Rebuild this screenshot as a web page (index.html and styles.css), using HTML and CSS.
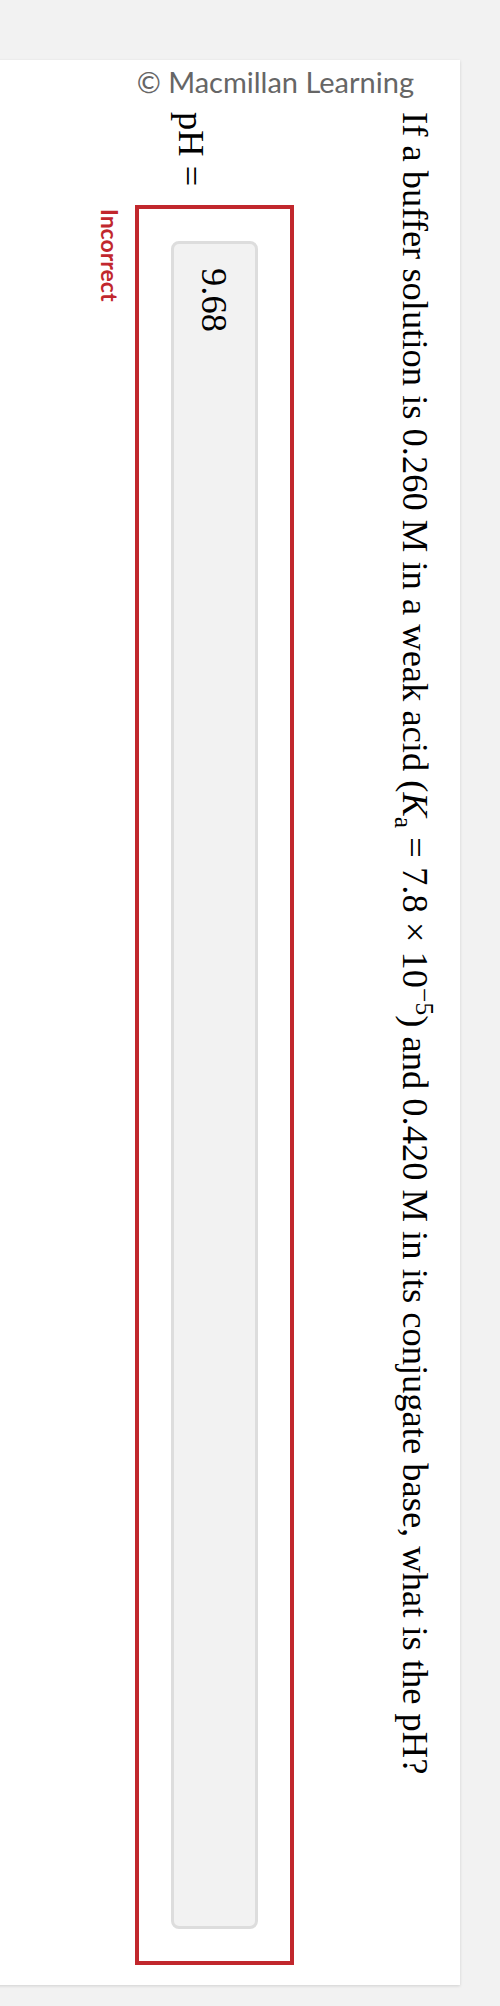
FILE: index.html
```html
<!DOCTYPE html>
<html lang="en">
<head>
<meta charset="utf-8">
<title>Buffer pH question</title>
<link rel="stylesheet" href="styles.css">
</head>
<body>
<div class="page">
  <div class="card">
    <div class="copyright">© Macmillan Learning</div>
    <div class="question-area">
      <p class="question">If a buffer solution is 0.260 M in a weak acid (<i>K</i><sub>a</sub> = 7.8 × 10<sup>−5</sup>) and 0.420 M in its conjugate base, what is the pH?</p>
      <div class="answer-row">
        <span class="label">pH =</span>
        <div class="answer-col">
          <div class="answer-box">
            <div class="answer-input">9.68</div>
          </div>
          <div class="status">Incorrect</div>
        </div>
      </div>
    </div>
  </div>
</div>
</body>
</html>
```
FILE: styles.css
```css
html, body {
  margin: 0;
  padding: 0;
  background: #f2f2f2;
}
.page {
  padding-top: 60px;
  height: 1946px;
  overflow: hidden;
}
.card {
  margin-left: -20px;
  width: 480px;
  background: #ffffff;
  box-shadow: 0 1px 3px rgba(0, 0, 0, 0.14);
  display: flex;
  flex-direction: column;
}
.copyright {
  font-family: Lato, "Open Sans", sans-serif;
  font-size: 29px;
  color: #666666;
  text-align: right;
  padding: 4px 46px 0 0;
  line-height: 36px;
  height: 44px;
}
.question-area {
  writing-mode: vertical-rl;
  text-orientation: sideways;
  height: 1877px;
  box-sizing: border-box;
  padding-block-start: 23px;
  padding-inline-start: 4px;
  padding-inline-end: 20px;
  display: flex;
  flex-direction: column;
  font-family: "Liberation Serif", "Times New Roman", serif;
  font-size: 36.5px;
  color: #000000;
}
.question {
  margin: 0;
  margin-block-end: 99px;
  line-height: 44px;
}
.question sub,
.question sup {
  font-size: 0.7em;
  line-height: 0;
}
.answer-row {
  display: flex;
  align-items: flex-start;
}
.label {
  line-height: 44px;
  margin-block-start: 81px;
  margin-inline-end: 19px;
  white-space: nowrap;
}
.answer-col {
  flex: 1;
  display: flex;
  flex-direction: column;
  align-self: stretch;
}
.answer-box {
  border: 4px solid #c1272d;
  padding: 32px;
  display: flex;
}
.answer-input {
  flex: 1;
  background: #f2f2f2;
  border: 3px solid #dddddd;
  border-radius: 8px;
  line-height: 81px;
  padding-inline-start: 24px;
}
.status {
  font-family: Lato, "Open Sans", sans-serif;
  font-weight: 700;
  font-size: 23px;
  line-height: 30px;
  color: #c1272d;
  margin-block-start: 10px;
  margin-inline-start: 4px;
}
```
